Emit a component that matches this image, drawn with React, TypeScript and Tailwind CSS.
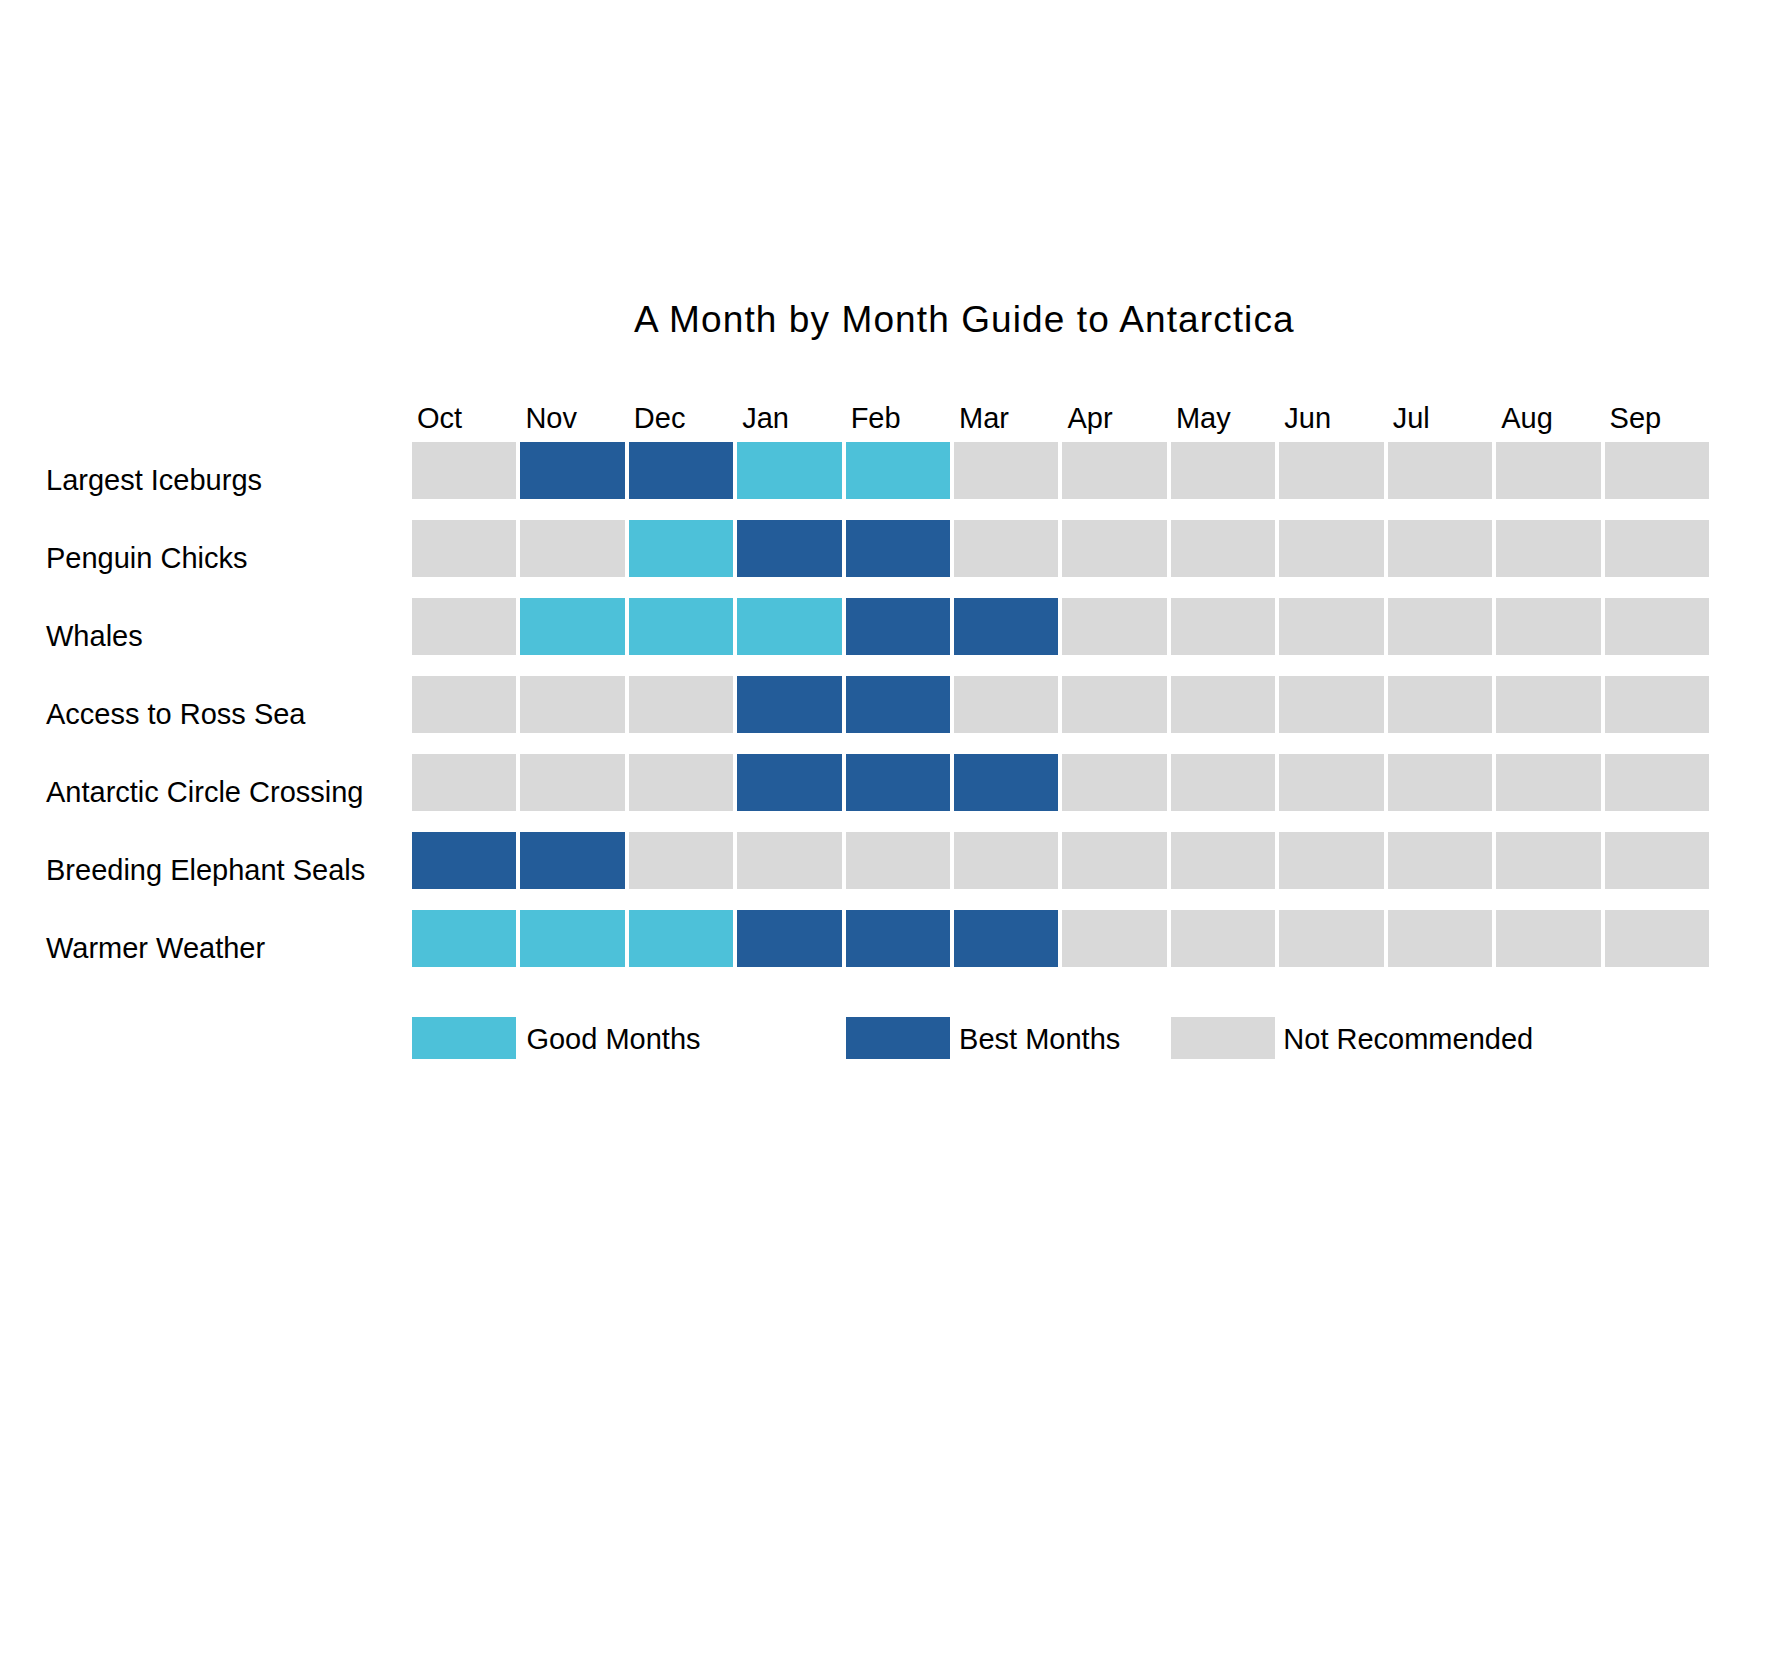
const MONTHS = ["Oct", "Nov", "Dec", "Jan", "Feb", "Mar", "Apr", "May", "Jun", "Jul", "Aug", "Sep"];

// G = good, B = best, N = not recommended
const ROWS: { label: string; cells: string }[] = [
  { label: "Largest Iceburgs", cells: "NBBGGNNNNNNN" },
  { label: "Penguin Chicks", cells: "NNGBBNNNNNNN" },
  { label: "Whales", cells: "NGGGBBNNNNNN" },
  { label: "Access to Ross Sea", cells: "NNNBBNNNNNNN" },
  { label: "Antarctic Circle Crossing", cells: "NNNBBBNNNNNN" },
  { label: "Breeding Elephant Seals", cells: "BBNNNNNNNNNN" },
  { label: "Warmer Weather", cells: "GGGBBBNNNNNN" },
];

const COLOR: Record<string, string> = {
  G: "bg-[#4dc1d9]",
  B: "bg-[#235c99]",
  N: "bg-[#d9d9d9]",
};

export default function App() {
  return (
    <div className="min-h-[1654px] w-full bg-white pl-[46px] pt-[301px] text-black font-['Liberation_Sans',Arial,sans-serif]">
      <h1 className="pl-[588px] text-[37px] leading-[37px] font-normal tracking-[1.1px]">A Month by Month Guide to Antarctica</h1>

      <div className="mt-[66px] flex">
        <div className="w-[366px] shrink-0" />
        <div className="grid h-[38px] w-[1297px] grid-cols-12 gap-x-[4px]">
          {MONTHS.map((m) => (
            <div key={m} className="pl-[5px] text-[29px] leading-[28px]">
              {m}
            </div>
          ))}
        </div>
      </div>

      <div className="flex flex-col gap-[21px]">
        {ROWS.map((row) => (
          <div key={row.label} className="flex h-[57px]">
            <div className="w-[366px] shrink-0 pt-[24px] text-[29px] leading-[29px] whitespace-nowrap">{row.label}</div>
            <div className="grid w-[1297px] grid-cols-12 gap-x-[4px]">
              {row.cells.split("").map((c, i) => (
                <div key={i} className={`h-[57px] ${COLOR[c]}`} />
              ))}
            </div>
          </div>
        ))}
      </div>

      <div className="mt-[50px] flex">
        <div className="w-[366px] shrink-0" />
        <div className="grid h-[42px] w-[1297px] grid-cols-12 gap-x-[4px] text-[29px] leading-[42px]">
          <div className="col-start-1 h-[42px] bg-[#4dc1d9]" />
          <div className="col-start-2 col-span-3 pl-[6px] pt-[1px] whitespace-nowrap">Good Months</div>
          <div className="col-start-5 h-[42px] bg-[#235c99]" />
          <div className="col-start-6 col-span-2 pl-[5px] pt-[1px] whitespace-nowrap">Best Months</div>
          <div className="col-start-8 h-[42px] bg-[#d9d9d9]" />
          <div className="col-start-9 col-span-4 pl-[4px] pt-[1px] whitespace-nowrap">Not Recommended</div>
        </div>
      </div>
    </div>
  );
}
